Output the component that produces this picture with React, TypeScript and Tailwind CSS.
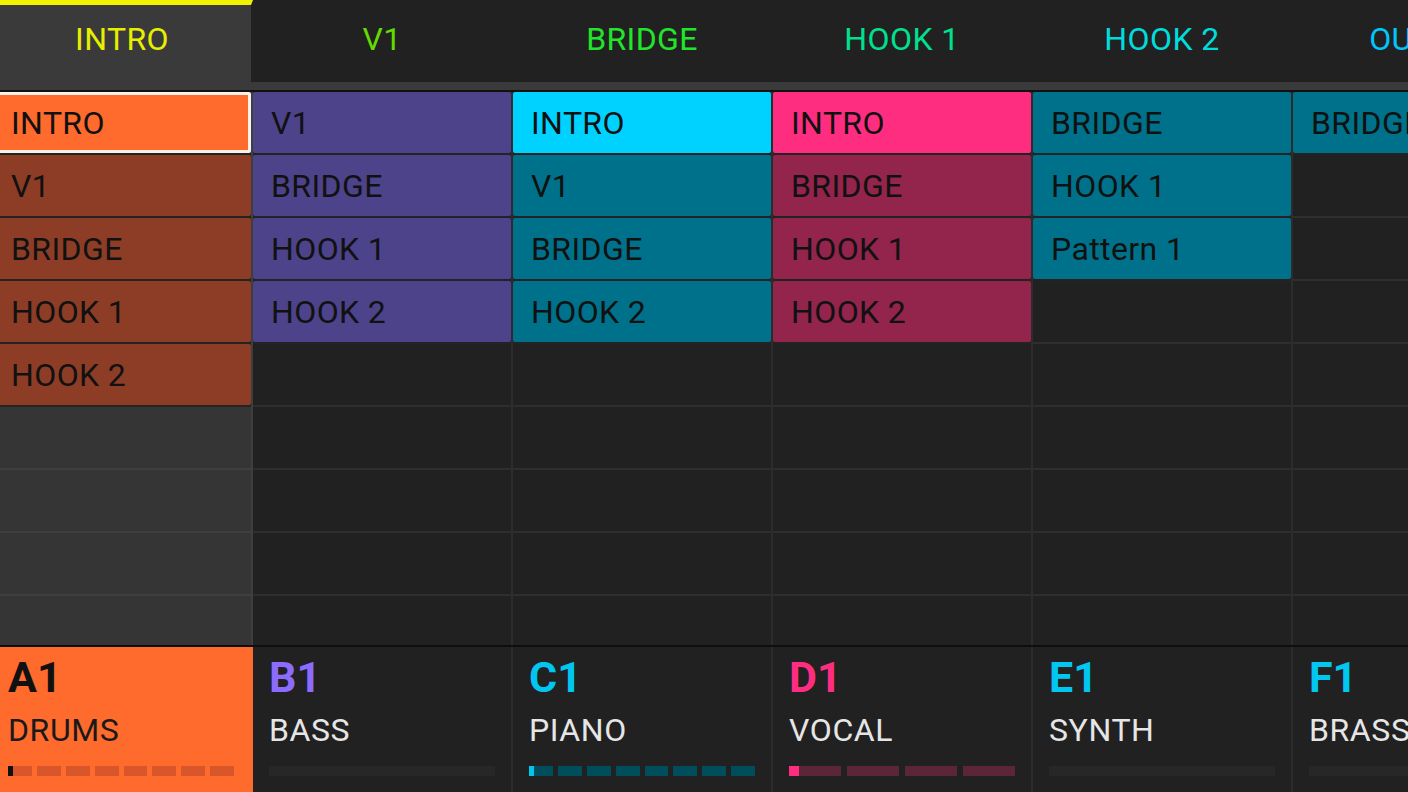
import React from 'react';

type Clip = { name: string; color: string; selected?: boolean };

interface Scene {
    label: string;
    labelColor: string;
    active?: boolean;
}

interface Group {
    id: string;
    name: string;
    idColor: string;
    active?: boolean;
    bar: 'segments' | 'empty';
    segments?: number;
    segColor?: string;
    markColor?: string;
    markWidth?: number;
    clips: Clip[];
}

const ROWS = 9;

const scenes: Scene[] = [
    { label: 'INTRO', labelColor: 'text-[#e6ef00]', active: true },
    { label: 'V1', labelColor: 'text-[#62dc00]' },
    { label: 'BRIDGE', labelColor: 'text-[#22e42a]' },
    { label: 'HOOK 1', labelColor: 'text-[#00e08e]' },
    { label: 'HOOK 2', labelColor: 'text-[#00dcdc]' },
    { label: 'OUTRO', labelColor: 'text-[#00c6fb]' },
];

const RUST = 'bg-[#8d3d26]';
const PURPLE = 'bg-[#4d438a]';
const TEAL = 'bg-[#00718a]';
const WINE = 'bg-[#93244b]';

const groups: Group[] = [
    {
        id: 'A1', name: 'DRUMS', idColor: 'text-[#111111]', active: true,
        bar: 'segments', segments: 8, segColor: 'bg-[#d9552a]', markColor: 'bg-[#111111]', markWidth: 5,
        clips: [
            { name: 'INTRO', color: 'bg-[#ff6a2d]', selected: true },
            { name: 'V1', color: RUST },
            { name: 'BRIDGE', color: RUST },
            { name: 'HOOK 1', color: RUST },
            { name: 'HOOK 2', color: RUST },
        ],
    },
    {
        id: 'B1', name: 'BASS', idColor: 'text-[#8b6cff]', bar: 'empty',
        clips: [
            { name: 'V1', color: PURPLE },
            { name: 'BRIDGE', color: PURPLE },
            { name: 'HOOK 1', color: PURPLE },
            { name: 'HOOK 2', color: PURPLE },
        ],
    },
    {
        id: 'C1', name: 'PIANO', idColor: 'text-[#00c6f0]',
        bar: 'segments', segments: 8, segColor: 'bg-[#004d5b]', markColor: 'bg-[#00c6f0]', markWidth: 5,
        clips: [
            { name: 'INTRO', color: 'bg-[#00d2ff]' },
            { name: 'V1', color: TEAL },
            { name: 'BRIDGE', color: TEAL },
            { name: 'HOOK 2', color: TEAL },
        ],
    },
    {
        id: 'D1', name: 'VOCAL', idColor: 'text-[#ff2d80]',
        bar: 'segments', segments: 4, segColor: 'bg-[#5d2638]', markColor: 'bg-[#ff2d80]', markWidth: 10,
        clips: [
            { name: 'INTRO', color: 'bg-[#ff2d80]' },
            { name: 'BRIDGE', color: WINE },
            { name: 'HOOK 1', color: WINE },
            { name: 'HOOK 2', color: WINE },
        ],
    },
    {
        id: 'E1', name: 'SYNTH', idColor: 'text-[#00c6f0]', bar: 'empty',
        clips: [
            { name: 'BRIDGE', color: TEAL },
            { name: 'HOOK 1', color: TEAL },
            { name: 'Pattern 1', color: TEAL },
        ],
    },
    {
        id: 'F1', name: 'BRASS', idColor: 'text-[#00c6f0]', bar: 'empty',
        clips: [{ name: 'BRIDGE', color: TEAL }],
    },
];

const SceneHeader: React.FC<{ scene: Scene }> = ({ scene }) => (
    <div
        className={`w-[260px] shrink-0 h-[82px] border-r-2 border-[#212121] ${
            scene.active ? 'bg-[#3a3a3a] border-t-[5px] border-t-[#f2f200]' : 'bg-[#212121]'
        }`}
    >
        <div className={`h-full flex items-center justify-center ${scene.active ? 'pb-[9px]' : 'pb-[4px]'}`}>
            <span className={`text-[32px] leading-none tracking-[0.4px] ${scene.labelColor}`}>{scene.label}</span>
        </div>
    </div>
);

const ClipCell: React.FC<{ clip?: Clip; first: boolean }> = ({ clip, first }) => {
    if (!clip) {
        return (
            <div
                className={`h-[63px] shrink-0 border-b-2 ${
                    first ? 'bg-[#353535] border-[#3f3f3f]' : 'bg-[#212121] border-[#2e2e2e]'
                }`}
            />
        );
    }
    return (
        <div className="h-[63px] shrink-0 border-b-2 border-[#232323] bg-[#232323]">
            <div
                className={`h-full rounded-[2px] flex items-center ${clip.color} ${
                    clip.selected ? 'border-[3px] border-[#fcf1ea] pl-[15px]' : 'pl-[18px]'
                }`}
            >
                <span className="text-[32px] leading-none tracking-[0.4px] text-[#111111] whitespace-nowrap">
                    {clip.name}
                </span>
            </div>
        </div>
    );
};

const GroupColumn: React.FC<{ group: Group; first: boolean }> = ({ group, first }) => (
    <div
        className={`w-[260px] shrink-0 flex flex-col border-r-2 ${
            first ? 'bg-[#353535] border-[#3e3e3e]' : 'bg-[#212121] border-[#2c2c2c]'
        }`}
    >
        {Array.from({ length: ROWS }, (_, i) => (
            <ClipCell key={i} clip={group.clips[i]} first={first} />
        ))}
    </div>
);

const LevelBar: React.FC<{ group: Group }> = ({ group }) => {
    if (group.bar === 'empty') {
        return <div className="w-[226px] h-[10px] bg-[#272727]" />;
    }
    const gap = group.segments === 4 ? 'gap-[6px]' : 'gap-[5px]';
    return (
        <div className={`w-[226px] h-[10px] flex ${gap}`}>
            {Array.from({ length: group.segments ?? 0 }, (_, i) => (
                <div key={i} className={`flex-1 h-full flex ${group.segColor}`}>
                    {i === 0 && <div className={`h-full ${group.markColor}`} style={{ width: group.markWidth }} />}
                </div>
            ))}
        </div>
    );
};

const GroupPad: React.FC<{ group: Group }> = ({ group }) => (
    <div
        className={`w-[260px] shrink-0 h-full flex flex-col pl-[15px] pt-[9px] border-r-2 ${
            group.active ? 'bg-[#ff6a2d] border-[#ff6a2d]' : 'bg-[#212121] border-[#2c2c2c] pl-[16px]'
        }`}
    >
        <span className={`text-[43px] leading-none font-bold ${group.idColor}`}>{group.id}</span>
        <span
            className={`mt-[15px] text-[32px] leading-none tracking-[0.6px] ${
                group.active ? 'text-[#1a1a1a]' : 'text-[#e6e6e6]'
            }`}
        >
            {group.name}
        </span>
        <div className="mt-[20px]">
            <LevelBar group={group} />
        </div>
    </div>
);

export default function App() {
    return (
        <div className="w-[1408px] h-[792px] overflow-hidden bg-[#212121] font-['Roboto','Liberation_Sans',sans-serif]">
            <div className="w-[1560px] -ml-[7px] flex flex-col">
                <div className="flex">
                    {scenes.map((s) => (
                        <SceneHeader key={s.label} scene={s} />
                    ))}
                </div>
                <div className="h-[8px] bg-[#3a3a3a]" />
                <div className="h-[2px] bg-[#111111]" />
                <div className="h-[553px] flex overflow-hidden">
                    {groups.map((g, i) => (
                        <GroupColumn key={g.id} group={g} first={i === 0} />
                    ))}
                </div>
                <div className="h-[2px] bg-[#0e0e0e]" />
                <div className="h-[145px] flex">
                    {groups.map((g) => (
                        <GroupPad key={g.id} group={g} />
                    ))}
                </div>
            </div>
        </div>
    );
}
